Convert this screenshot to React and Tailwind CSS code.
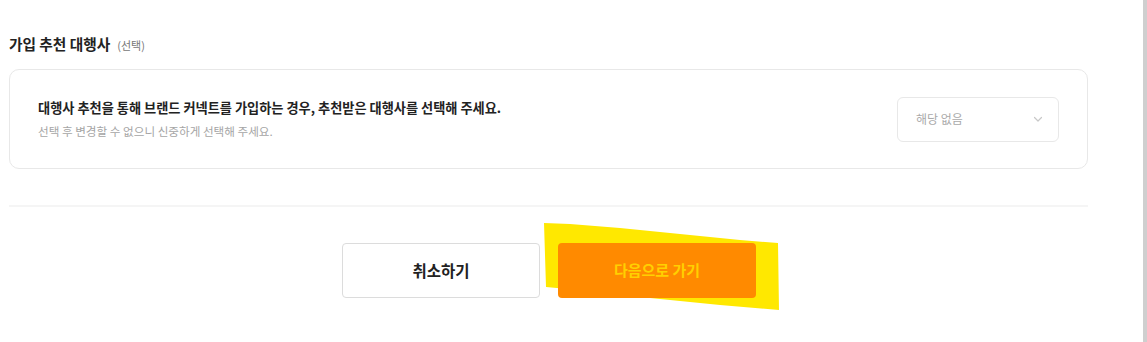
import React from 'react';

const font = { fontFamily: '"Noto Sans CJK KR", "Noto Sans", sans-serif' };

const ChevronDown = () => (
  <svg width="12" height="12" viewBox="0 0 12 12" fill="none" aria-hidden="true">
    <path d="M2.5 4.5 6 8l3.5-3.5" stroke="#c8c8c8" strokeWidth="1.2" strokeLinecap="round" strokeLinejoin="round" />
  </svg>
);

// 형광펜 표시 (스크린샷 위 마킹)
const Highlight = () => (
  <svg
    className="absolute left-0 top-0 pointer-events-none"
    width="1147"
    height="342"
    viewBox="0 0 1147 342"
    aria-hidden="true"
  >
    <polygon
      points="544,223 570,224 620,228 680,234 740,240 778,243 779,310 720,305 650,298 600,292 546,287"
      fill="#ffe800"
    />
  </svg>
);

const App = () => {
  return (
    <div className="relative flex w-[1147px] h-[342px] bg-white overflow-hidden" style={font}>
      <Highlight />
      <div className="flex-1 pl-[9px] pr-[55px] pt-[34px]">
        <h3 className="flex items-baseline gap-[7px] h-[20px] leading-[20px] text-[14.7px] font-bold text-[#222]">
          가입 추천 대행사
          <span className="text-[11px] font-normal text-[#777]">(선택)</span>
        </h3>

        <div className="mt-[15px] h-[100px] flex items-center justify-between px-[28px] border border-[#e8e8e8] rounded-[10px]">
          <div>
            <p className="text-[13.2px] leading-[18px] font-bold text-[#222]">
              대행사 추천을 통해 브랜드 커넥트를 가입하는 경우, 추천받은 대행사를 선택해 주세요.
            </p>
            <p className="mt-[6px] text-[11.6px] leading-[16px] text-[#a5a5a5]">
              선택 후 변경할 수 없으니 신중하게 선택해 주세요.
            </p>
          </div>
          <div className="w-[162px] h-[45px] flex items-center justify-between pl-[18px] pr-[14px] border border-[#e8e8e8] rounded-[6px]">
            <span className="text-[12px] text-[#aaa]">해당 없음</span>
            <ChevronDown />
          </div>
        </div>

        <div className="mt-[36px] h-[2px] bg-[#f5f5f5]" />

        <div className="relative mt-[36px] flex justify-center gap-[18px] pl-[1px]">
          <button className="w-[198px] h-[55px] border border-[#dcdcdc] rounded-[4px] bg-white text-[15.5px] font-bold text-[#222]">
            취소하기
          </button>
          <button className="w-[198px] h-[55px] rounded-[4px] bg-[#ff8a00] text-[15px] font-bold text-[#ffd000]">
            다음으로 가기
          </button>
        </div>
      </div>
      <div className="w-[4px] h-full bg-[#cfcfcf]" />
    </div>
  );
};

export default App;
